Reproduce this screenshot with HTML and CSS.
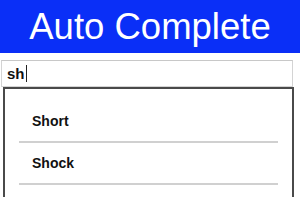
FILE: index.html
```html
<!DOCTYPE HTML>
<html>

<head>
    <meta charset="utf-8">
    <link rel="stylesheet" href="styles.css">
</head>

<body>
    <div class="header">Auto Complete</div>

    <div class="search">
        <span class="query">sh</span><span class="caret"></span>
    </div>

    <div class="results">
        <div class="item">Short</div>
        <div class="item">Shock</div>
    </div>
</body>

</html>
```
FILE: styles.css
```css
body {
    margin: 0;
    font-family: "Liberation Sans", Arial, sans-serif;
    overflow: hidden;
}

.header {
    height: 53px;
    background-color: #0a2ff7;
    color: #fff;
    font-size: 36.5px;
    line-height: 53px;
    text-align: center;
}

.search {
    margin: 7px 7px 0 1px;
    height: 25px;
    border: 1px solid #d4d4d4;
    border-top-color: #c8c8c8;
    display: flex;
    align-items: center;
    padding-left: 5px;
}

.query {
    font-size: 15px;
    font-weight: bold;
    color: #111;
}

.caret {
    width: 1px;
    height: 17px;
    background-color: #222;
    margin-left: 1px;
}

.results {
    margin: 0 6px 0 3px;
    border: 2px solid #4a4a4a;
    border-bottom: none;
    padding: 12px 14px 0 14px;
    height: 96px;
}

.item {
    height: 40px;
    line-height: 40px;
    border-bottom: 2px solid #d0d0d0;
    padding-left: 13px;
    font-size: 14px;
    font-weight: bold;
    color: #111;
}
```
